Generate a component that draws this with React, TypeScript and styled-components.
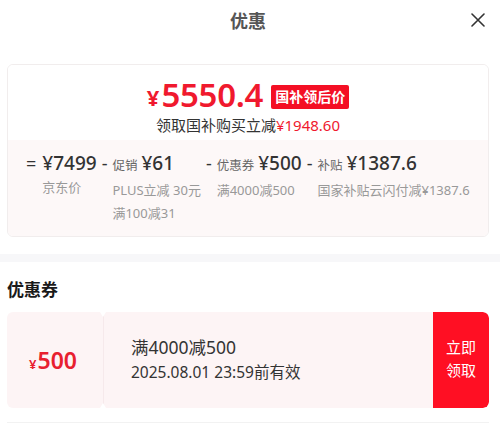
import styled, { createGlobalStyle } from 'styled-components'

const GlobalStyle = createGlobalStyle`
  html, body {
    margin: 0;
    padding: 0;
    background: #fff;
  }
  body {
    font-family: "Noto Sans", "Noto Sans CJK SC", sans-serif;
    color: #333;
  }
`

const breakdown = [
  { op: '=', label: '', value: '¥7499', notes: ['京东价'] },
  { op: '-', label: '促销', value: '¥61', notes: ['PLUS立减 30元', '满100减31'] },
  { op: '-', label: '优惠券', value: '¥500', notes: ['满4000减500'] },
  { op: '-', label: '补贴', value: '¥1387.6', notes: ['国家补贴云闪付减¥1387.6'] },
]

export default function App() {
  return (
    <Page>
      <GlobalStyle />
      <Header>
        <Title>优惠</Title>
        <Close aria-label="close">
          <svg width="14" height="14" viewBox="0 0 14 14">
            <path d="M1 1 L13 13 M13 1 L1 13" stroke="#333" strokeWidth="1.6" strokeLinecap="round" />
          </svg>
        </Close>
      </Header>

      <Body>
        <PriceCard>
          <PriceTop>
            <PriceLine>
              <Yen>¥</Yen>
              <BigPrice>5550.4</BigPrice>
              <Badge>国补领后价</Badge>
            </PriceLine>
            <Saving>
              领取国补购买立减<em>¥1948.60</em>
            </Saving>
          </PriceTop>
          <Breakdown>
            {breakdown.map((item) => (
              <Item key={item.value}>
                <Op>{item.op}</Op>
                <Col>
                  <ValueRow>
                    {item.label && <ValueLabel>{item.label}</ValueLabel>}
                    <Value>{item.value}</Value>
                  </ValueRow>
                  {item.notes.map((n) => (
                    <Note key={n}>{n}</Note>
                  ))}
                </Col>
              </Item>
            ))}
          </Breakdown>
        </PriceCard>
      </Body>

      <Band />

      <Body>
        <SectionTitle>优惠券</SectionTitle>
        <Coupon>
          <Amount>
            <small>¥</small>500
          </Amount>
          <Divider />
          <CouponInfo>
            <CouponRule>满4000减500</CouponRule>
            <CouponDate>2025.08.01 23:59前有效</CouponDate>
          </CouponInfo>
          <Claim>
            立即
            <br />
            领取
          </Claim>
        </Coupon>
        <Rule />
      </Body>
    </Page>
  )
}

const Page = styled.div`
  width: 500px;
  height: 440px;
  overflow: hidden;
  background: #fff;
`

const Header = styled.div`
  position: relative;
  height: 40px;
  display: flex;
  align-items: center;
  justify-content: center;
  padding-right: 4px;
`

const Title = styled.h1`
  margin: 0;
  font-size: 18px;
  font-weight: 700;
  color: #555;
`

const Close = styled.button`
  position: absolute;
  right: 15px;
  top: 13px;
  border: none;
  background: none;
  padding: 0;
  display: flex;
`

const Body = styled.div`
  padding: 0 11px 0 7px;
`

const PriceCard = styled.div`
  margin-top: 24px;
  border: 1px solid #f1eded;
  border-radius: 6px;
  overflow: hidden;
`

const PriceTop = styled.div`
  background: #fff;
  display: flex;
  flex-direction: column;
  align-items: center;
  padding: 13px 0 4px;
`

const PriceLine = styled.div`
  display: flex;
  align-items: center;
  height: 34px;
  color: #f0192e;
`

const Yen = styled.span`
  font-size: 22px;
  line-height: 26px;
  font-weight: 700;
  margin-right: 2px;
  margin-top: 4px;
`

const BigPrice = styled.span`
  font-size: 33px;
  line-height: 34px;
  font-weight: 600;
  letter-spacing: -0.3px;
`

const Badge = styled.span`
  margin-left: 8px;
  margin-top: 3px;
  background: #f40f24;
  color: #fff;
  font-size: 14px;
  font-weight: 700;
  line-height: 24px;
  padding: 0 4px;
  border-radius: 2px;
`

const Saving = styled.div`
  margin-top: 3px;
  font-size: 15px;
  line-height: 21px;
  color: #333;

  em {
    font-style: normal;
    color: #f0192e;
  }
`

const Breakdown = styled.div`
  display: flex;
  align-items: flex-start;
  padding: 10px 0 11px 18px;
  background: #fdf8f8;
`

const Item = styled.div`
  display: flex;
  align-items: flex-start;
`

const Op = styled.span`
  font-size: 18px;
  line-height: 26px;
  color: #333;
  margin: 0 5px 0 5px;

  ${Item}:first-child & {
    margin-left: 0;
    margin-right: 6px;
  }
`

const Col = styled.div`
  display: flex;
  flex-direction: column;
`

const ValueRow = styled.div`
  display: flex;
  align-items: baseline;
  gap: 4px;
  line-height: 26px;
`

const ValueLabel = styled.span`
  font-size: 12.5px;
  color: #666;
`

const Value = styled.span`
  font-size: 19px;
  font-weight: 500;
  color: #333;
`

const Note = styled.div`
  font-size: 13px;
  line-height: 23px;
  color: #999;
  white-space: nowrap;
`

const Band = styled.div`
  margin-top: 17px;
  height: 8px;
  background: #f7f7f9;
`

const SectionTitle = styled.h2`
  margin: 16px 0 10px;
  font-size: 17px;
  line-height: 24px;
  font-weight: 700;
  color: #1a1a1a;
`

const Coupon = styled.div`
  display: grid;
  grid-template-columns: 96px 1px 1fr 56px;
  height: 96px;
  background: #fdf4f5;
  border-radius: 6px;
  overflow: hidden;
`

const Amount = styled.div`
  display: flex;
  align-items: baseline;
  justify-content: center;
  align-self: center;
  padding-right: 4px;
  color: #e8202f;
  font-size: 23px;
  font-weight: 600;

  small {
    font-size: 13px;
    font-weight: 600;
    margin-right: 1px;
  }
`

const Divider = styled.div`
  position: relative;
  background: #f6e9eb;

  &::before,
  &::after {
    content: '';
    position: absolute;
    left: -3px;
    border-left: 3.5px solid transparent;
    border-right: 3.5px solid transparent;
  }
  &::before {
    top: 0;
    border-top: 5px solid #fff;
  }
  &::after {
    bottom: 0;
    border-bottom: 5px solid #fff;
  }
`

const CouponInfo = styled.div`
  display: flex;
  flex-direction: column;
  justify-content: center;
  padding-left: 27px;
`

const CouponRule = styled.div`
  font-size: 17.5px;
  line-height: 25px;
  color: #333;
`

const CouponDate = styled.div`
  font-size: 15.5px;
  line-height: 25px;
  color: #333;
`

const Claim = styled.button`
  border: none;
  background: #ff0f23;
  color: #fff;
  font-family: "Liberation Serif", "Noto Sans CJK SC", serif;
  font-size: 15px;
  line-height: 23px;
  padding: 0;
  border-radius: 0 6px 6px 0;
`

const Rule = styled.div`
  margin-top: 14px;
  height: 1px;
  background: #f2f2f2;
`
